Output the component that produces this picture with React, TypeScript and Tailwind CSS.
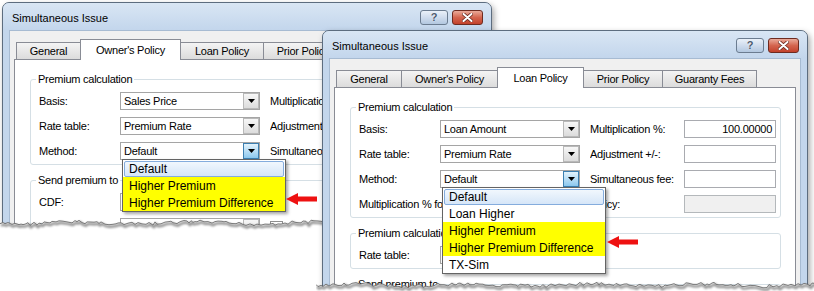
import React from "react";

const LBL = "text-[11px] tracking-[-0.25px] leading-[13px] text-black whitespace-nowrap";

function Tri() {
  return (
    <svg width="7" height="4" viewBox="0 0 7 4">
      <path d="M0 0H7L3.5 4Z" fill="#000" />
    </svg>
  );
}

function DropList({ items, yellow }: { items: string[]; yellow: number[] }) {
  return (
    <div className="absolute left-[1px] top-full z-20 w-[164px] border border-[#646464] bg-white shadow-[2px_2px_3px_rgba(0,0,0,0.35)]">
      {items.map((t, i) => (
        <div
          key={t}
          className={"h-[17px] flex items-center " + (yellow.includes(i) ? "bg-[#ffff00]" : "bg-white")}
        >
          {i === 0 ? (
            <div className="mx-px h-[16px] flex-1 flex items-center rounded-[2px] border border-[#84acdd] bg-gradient-to-b from-[#f1f7fd] to-[#d6e6f8] pl-[4px] text-[12px] leading-[14px] whitespace-nowrap">
              {t}
            </div>
          ) : (
            <span className="pl-[6px] text-[12px] leading-[14px] whitespace-nowrap">{t}</span>
          )}
        </div>
      ))}
    </div>
  );
}

function Combo({ value, hot, children }: { value: string; hot?: boolean; children?: React.ReactNode }) {
  return (
    <div className="relative w-[140px] h-[18px] shrink-0 border border-[#a5a5a5] bg-white flex">
      <span className={LBL + " flex-1 pl-[3px] leading-[16px] overflow-hidden"}>{value}</span>
      {hot ? (
        <div className="w-[16px] h-full border border-[#3c7fb1] bg-gradient-to-b from-[#e3f3fc] to-[#8cc8ee] flex items-center justify-center">
          <Tri />
        </div>
      ) : (
        <div className="w-[16px] h-full border border-[#b9b9b9] bg-gradient-to-b from-[#f7f7f7] to-[#dcdcdc] flex items-center justify-center">
          <Tri />
        </div>
      )}
      {children}
    </div>
  );
}

function Input({ value, disabled }: { value?: string; disabled?: boolean }) {
  return (
    <div
      className={
        "w-[92px] h-[18px] shrink-0 border flex items-center justify-end pr-[3px] " +
        (disabled ? "border-[#b4b8bb] bg-[#f0f0f0]" : "border-[#a9abb0] bg-white")
      }
    >
      <span className={LBL}>{value}</span>
    </div>
  );
}

function Row({ label, children }: { label: string; children?: React.ReactNode }) {
  return (
    <div className="flex items-center h-[18px]">
      <span className={LBL + " w-[81px] shrink-0 overflow-hidden"}>{label}</span>
      {children}
    </div>
  );
}

function RightPair({ label, value, disabled }: { label: string; value?: string; disabled?: boolean }) {
  return (
    <>
      <span className={LBL + " ml-[10px] w-[94px] shrink-0 overflow-hidden"}>{label}</span>
      <Input value={value} disabled={disabled} />
    </>
  );
}

function Group({ legend, children }: { legend: string; children?: React.ReactNode }) {
  return (
    <div className="relative shrink-0 border border-[#d5dfe5] rounded-[3px] pl-[8px] pr-[5px] pt-[12px] pb-[4px] flex flex-col gap-[7px]">
      <span className={LBL + " absolute left-[5px] -top-[7px] bg-white px-[2px]"}>{legend}</span>
      {children}
    </div>
  );
}

function Win({
  className,
  tabs,
  widths,
  sel,
  children,
}: {
  className: string;
  tabs: string[];
  widths: number[];
  sel: number;
  children?: React.ReactNode;
}) {
  return (
    <div
      className={
        "absolute isolate flex flex-col rounded-t-[7px] border border-[#5d6d7f] bg-[#c3d6ec] shadow-[2px_3px_6px_rgba(0,0,0,0.35)] " +
        className
      }
    >
      <div className="h-[27px] shrink-0 flex items-start rounded-t-[6px] bg-gradient-to-b from-[#d9e6f4] to-[#c3d6ec] pl-[9px] pr-[8px]">
        <span className="mt-[9px] text-[11px] leading-[13px] whitespace-nowrap">Simultaneous Issue</span>
        <div className="ml-auto mt-[7px] flex gap-[4px]">
          <div className="w-[28px] h-[15px] rounded-[3px] border border-[#6b7c90] bg-gradient-to-b from-[#eaf1f9] via-[#cfdced] to-[#b3c8e0] flex items-center justify-center">
            <span className="text-[11px] leading-[11px] font-bold text-[#4a5a6e] [text-shadow:0_0_1px_#fff]">?</span>
          </div>
          <div className="w-[31px] h-[15px] rounded-[3px] border border-[#6e2b20] bg-gradient-to-b from-[#e9aa9a] via-[#d4654f] to-[#c2412b] flex items-center justify-center">
            <svg width="11" height="9" viewBox="0 0 11 9">
              <path d="M1.5 1L9.5 8M9.5 1L1.5 8" stroke="#6b2a20" strokeWidth="3.6" strokeLinecap="round" />
              <path d="M1.5 1L9.5 8M9.5 1L1.5 8" stroke="#ffffff" strokeWidth="2" strokeLinecap="round" />
            </svg>
          </div>
        </div>
      </div>
      <div className="flex-1 min-h-0 mx-[6px] border border-[#a7bbd2] bg-[#f0f0f0] pl-[4px] pr-[4px] pt-[8px] flex flex-col">
        <div className="relative z-10 flex items-end h-[20px] pl-[2px] shrink-0">
          {tabs.map((t, i) => (
            <div
              key={t}
              style={{ width: widths[i] }}
              className={
                "shrink-0 flex items-center justify-center border border-b-0 border-[#898c95] " +
                (i === 0 ? "" : "-ml-px ") +
                (i === sel
                  ? "relative h-[21px] -mb-px bg-white"
                  : "h-[17px] bg-gradient-to-b from-[#f4f4f4] to-[#dcdcdc]")
              }
            >
              <span className={LBL}>{t}</span>
            </div>
          ))}
        </div>
        <div className="flex-1 border border-[#898c95] bg-white pt-[19px] pl-[15px] pr-[14px] flex flex-col gap-[15px] overflow-hidden">
          {children}
        </div>
      </div>
    </div>
  );
}

function jag(width: number, seed: number) {
  let s = seed;
  const rnd = () => {
    s = (s * 9301 + 49297) % 233280;
    return s / 233280;
  };
  const pts: [number, number][] = [];
  let x = 0;
  while (x <= width + 3) {
    pts.push([x, 6 + (rnd() - 0.5) * 3.6 + Math.sin(x / 19 + seed) * 1.1]);
    x += 2 + Math.floor(rnd() * 3);
  }
  return pts;
}

function Torn({ left, top, width, height, seed }: { left: number; top: number; width: number; height: number; seed: number }) {
  const pts = jag(width, seed);
  const line = pts.map((p, i) => (i ? "L" : "M") + p[0].toFixed(1) + " " + p[1].toFixed(1)).join(" ");
  const fill = line + ` L${width + 4} ${height} L0 ${height} Z`;
  return (
    <svg
      className="absolute pointer-events-none"
      style={{ left, top, width, height }}
      width={width}
      height={height}
      viewBox={`0 0 ${width} ${height}`}
    >
      <defs>
        <filter id={"b" + seed} x="-5%" y="-50%" width="110%" height="200%">
          <feGaussianBlur stdDeviation="0.9" />
        </filter>
      </defs>
      <path d={fill} fill="#ffffff" />
      <path d={line} transform="translate(1 2)" fill="none" stroke="rgba(0,0,0,0.45)" strokeWidth="2.4" filter={`url(#b${seed})`} />
      <path d={line} fill="none" stroke="#6f6f6f" strokeWidth="0.9" />
    </svg>
  );
}

function Arrow({ className }: { className: string }) {
  return (
    <svg className={"absolute " + className} width="31" height="12" viewBox="0 0 31 12">
      <path d="M0 6L12 0V3.5H31V8.5H12V12Z" fill="#ee1111" />
    </svg>
  );
}

const TABS = ["General", "Owner's Policy", "Loan Policy", "Prior Policy", "Guaranty Fees"];

export default function App() {
  return (
    <div className="relative w-[814px] h-[291px] overflow-hidden bg-white font-['Liberation_Sans',Arial,sans-serif] text-black">
      <Win className="left-[2px] top-[2px] w-[490px] h-[240px]" tabs={TABS} widths={[65, 101, 84, 80, 95]} sel={1}>
        <Group legend="Premium calculation">
          <Row label="Basis:">
            <Combo value="Sales Price" />
            <RightPair label="Multiplication %:" value="100.00000" />
          </Row>
          <Row label="Rate table:">
            <Combo value="Premium Rate" />
            <RightPair label="Adjustment +/-:" />
          </Row>
          <Row label="Method:">
            <Combo value="Default" hot>
              <DropList items={["Default", "Higher Premium", "Higher Premium Difference"]} yellow={[1, 2]} />
            </Combo>
            <RightPair label="Simultaneous fee:" />
          </Row>
        </Group>
        <Group legend="Send premium to">
          <Row label="CDF:">
            <Combo value="" />
          </Row>
          <Row label="Underwriter:">
            <Combo value="" />
            <div className="ml-[10px] w-[13px] h-[13px] border border-[#8f8f8f] bg-white" />
            <span className={LBL + " ml-[6px]"}>Disburse</span>
          </Row>
        </Group>
      </Win>
      <Torn left={0} top={217} width={332} height={40} seed={7} />

      <Win className="left-[322px] top-[30px] w-[486px] h-[270px]" tabs={TABS} widths={[66, 97, 87, 80, 95]} sel={2}>
        <Group legend="Premium calculation">
          <Row label="Basis:">
            <Combo value="Loan Amount" />
            <RightPair label="Multiplication %:" value="100.00000" />
          </Row>
          <Row label="Rate table:">
            <Combo value="Premium Rate" />
            <RightPair label="Adjustment +/-:" />
          </Row>
          <Row label="Method:">
            <Combo value="Default" hot>
              <DropList
                items={["Default", "Loan Higher", "Higher Premium", "Higher Premium Difference", "TX-Sim"]}
                yellow={[2, 3]}
              />
            </Combo>
            <RightPair label="Simultaneous fee:" />
          </Row>
          <div className="flex items-center h-[18px]">
            <div className="flex w-[261px] shrink-0">
              <span className={LBL + " flex-1 overflow-hidden"}>Multiplication % for simultaneous owner's</span>
              <span className={LBL + " shrink-0"}>policy:</span>
            </div>
            <div className="ml-[64px]">
              <Input disabled />
            </div>
          </div>
        </Group>
        <Group legend="Premium calculation for owner's policy">
          <Row label="Rate table:">
            <Combo value="Premium Rate" />
          </Row>
        </Group>
        <Group legend="Send premium to">
          <Row label="CDF:">
            <Combo value="" />
          </Row>
        </Group>
      </Win>
      <Torn left={316} top={279} width={498} height={14} seed={3} />

      <Arrow className="left-[286px] top-[193px]" />
      <Arrow className="left-[607px] top-[236px]" />
    </div>
  );
}
